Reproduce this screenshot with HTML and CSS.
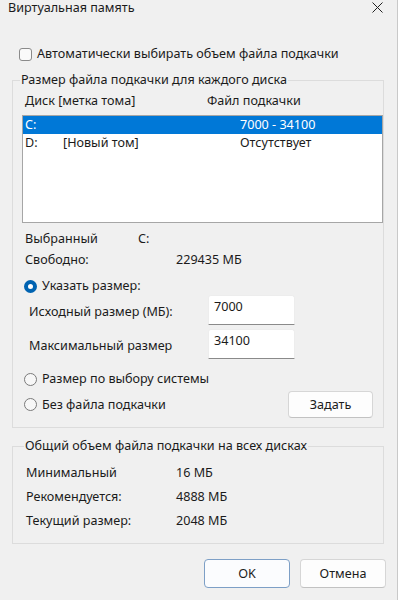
FILE: index.html
```html
<!DOCTYPE html>
<html lang="ru">
<head>
    <meta charset="UTF-8">
    <meta name="viewport" content="width=device-width, initial-scale=1.0">
    <title>Виртуальная память</title>
    <link rel="stylesheet" href="styles.css">
</head>
<body>
    <div class="window">
        <div class="titlebar">
            <span class="title">Виртуальная память</span>
            <svg class="close" width="11" height="11" viewBox="0 0 11 11">
                <path d="M0.5 0.5 L10.5 10.5 M10.5 0.5 L0.5 10.5" stroke="#222" stroke-width="1" fill="none"/>
            </svg>
        </div>

        <label class="auto-row">
            <span class="checkbox"></span>
            Автоматически выбирать объем файла подкачки
        </label>

        <!-- Per-drive settings -->
        <fieldset class="group group-disks">
            <legend>Размер файла подкачки для каждого диска</legend>
            <div class="list-head">
                <span class="head-drive">Диск [метка тома]</span>
                <span>Файл подкачки</span>
            </div>
            <div class="listbox">
                <div class="list-row selected">
                    <span>C:</span><span></span><span>7000 - 34100</span>
                </div>
                <div class="list-row">
                    <span>D:</span><span>[Новый том]</span><span>Отсутствует</span>
                </div>
            </div>

            <div class="info">
                <div class="info-row"><span class="info-key">Выбранный</span><span>C:</span></div>
                <div class="info-row"><span class="info-key wide">Свободно:</span><span>229435 МБ</span></div>
            </div>

            <div class="radio-row checked-row">
                <span class="radio checked"></span>Указать размер:
            </div>
            <div class="size-row">
                <span class="size-label">Исходный размер (МБ):</span>
                <div class="size-input">7000</div>
            </div>
            <div class="size-row second">
                <span class="size-label">Максимальный размер</span>
                <div class="size-input">34100</div>
            </div>
            <div class="radio-row system-row">
                <span class="radio"></span>Размер по выбору системы
            </div>
            <div class="radio-row none-row">
                <span class="radio"></span>Без файла подкачки
                <button class="btn btn-set">Задать</button>
            </div>
        </fieldset>

        <!-- Totals -->
        <fieldset class="group group-total">
            <legend>Общий объем файла подкачки на всех дисках</legend>
            <div class="total-row"><span class="total-key">Минимальный</span><span>16 МБ</span></div>
            <div class="total-row"><span class="total-key">Рекомендуется:</span><span>4888 МБ</span></div>
            <div class="total-row"><span class="total-key">Текущий размер:</span><span>2048 МБ</span></div>
        </fieldset>

        <div class="actions">
            <button class="btn btn-ok">OK</button>
            <button class="btn btn-cancel">Отмена</button>
        </div>
    </div>
</body>
</html>
```

FILE: styles.css
```css
* {
    margin: 0;
    padding: 0;
    box-sizing: border-box;
}

body {
    font-family: "Noto Sans", "Open Sans", sans-serif;
    font-size: 12.6px;
    color: #1b1b1b;
    background-color: #f0f0f0;
}

.window {
    width: 398px;
    height: 600px;
    border-right: 1px solid #c9c9c9;
}

.titlebar {
    height: 16px;
    padding: 0 14px 0 8px;
    display: flex;
    justify-content: space-between;
    align-items: center;
}

.title {
    line-height: 16px;
}

.close {
    margin-top: -2px;
}

.auto-row {
    display: flex;
    align-items: center;
    height: 18px;
    margin-top: 29px;
    padding-left: 19px;
    line-height: 18px;
}

.checkbox {
    width: 13px;
    height: 13px;
    border: 1px solid #8a8a8a;
    border-radius: 3px;
    background-color: #fafafa;
    margin-right: 5px;
}

/* Group boxes */
.group {
    margin: 8px 13px 0 12px;
    border: 1px solid #dcdcdc;
    padding: 3px 0 9px 9px;
}

.group legend {
    margin-left: -2px;
    padding: 0 1px;
    line-height: 18px;
}

.list-head {
    display: flex;
    height: 18px;
    line-height: 18px;
    padding-left: 3px;
}

.head-drive {
    width: 182px;
}

.listbox {
    margin-top: 5px;
    height: 108px;
    background-color: #fff;
    border: 1px solid #a6a6a6;
}

.list-row {
    display: grid;
    grid-template-columns: 38px 177px 1fr;
    height: 18px;
    line-height: 18px;
    padding-left: 2px;
}

.list-row.selected {
    background-color: #0078d7;
    color: #fff;
}

.info {
    margin-top: 5px;
}

.info-row {
    display: flex;
    height: 21px;
    line-height: 21px;
    padding-left: 3px;
}

.info-key {
    width: 113px;
}

.info-key.wide {
    width: 151px;
}

.radio-row {
    display: flex;
    align-items: center;
    height: 18px;
    line-height: 18px;
    padding-left: 2px;
}

.checked-row {
    margin-top: 7px;
}

.radio {
    width: 13px;
    height: 13px;
    border-radius: 50%;
    border: 1px solid #7a7a7a;
    background-color: #f7f7f7;
    margin-right: 5px;
}

.radio.checked {
    border: 4px solid #0063b1;
    background-color: #fff;
}

.size-row {
    display: flex;
    align-items: center;
    height: 30px;
    padding-left: 7px;
}

.size-row.second {
    margin-top: 4px;
}

.size-label {
    width: 179px;
    padding-top: 3px;
}

.size-input {
    width: 87px;
    height: 30px;
    background-color: #fff;
    border: 1px solid #ededed;
    border-bottom: 1px solid #8a8a8a;
    border-radius: 3px 3px 0 0;
    padding: 2px 0 0 5px;
    line-height: 18px;
}

.system-row {
    margin-top: 11px;
}

.none-row {
    height: 27px;
    margin-top: 3px;
}

.btn {
    font-family: inherit;
    font-size: 12.6px;
    color: #1b1b1b;
    background-color: #fdfdfd;
    border: 1px solid #d6d6d6;
    border-bottom-color: #c2c2c2;
    border-radius: 4px;
}

.btn-set {
    margin-left: auto;
    margin-right: 10px;
    width: 85px;
    height: 27px;
}

.group-total {
    margin-top: 9px;
    padding: 6px 0 10px 13px;
}

.total-row {
    display: flex;
    height: 24px;
    line-height: 24px;
}

.total-key {
    width: 150px;
}

.actions {
    display: flex;
    justify-content: flex-end;
    gap: 10px;
    margin-top: 15px;
    padding-right: 11px;
}

.actions .btn {
    width: 86px;
    height: 29px;
}

.btn-ok {
    border-color: #7d9fc6;
    background-color: #fbfcfe;
}
```
